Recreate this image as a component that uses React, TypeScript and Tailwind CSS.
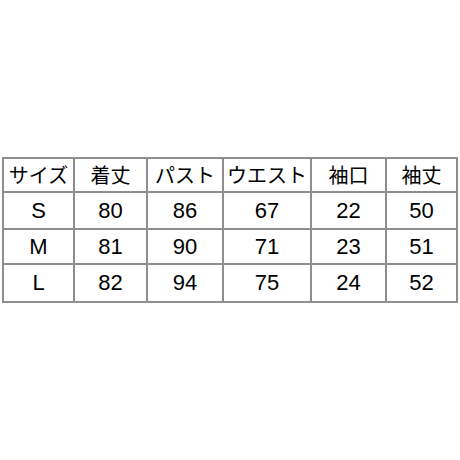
import React from "react";

const header = ["サイズ", "着丈", "バスト", "ウエスト", "袖口", "袖丈"];
const rows = [
  ["S", "80", "86", "67", "22", "50"],
  ["M", "81", "90", "71", "23", "51"],
  ["L", "82", "94", "75", "24", "52"],
];
const rowH = ["h-[35px]", "h-[33px]", "h-[36px]"];

export default function App() {
  return (
    <div className="w-[460px] h-[460px] bg-white pt-[157px] pl-[2px]">
      <div
        className="grid w-fit bg-[#8e8e8e] p-[2px] gap-[2px] grid-cols-[69px_71px_74px_86px_73px_69px] text-black"
        style={{ fontFamily: '"Noto Sans CJK JP", "Noto Sans CJK KR", sans-serif' }}
      >
        {header.map((h, i) => (
          <div
            key={i}
            className="h-[32px] bg-white flex items-center justify-center text-[20px] leading-none"
          >
            {h === "バスト" ? "パスト" : h}
          </div>
        ))}
        {rows.map((r, ri) =>
          r.map((c, ci) => (
            <div
              key={ri + "-" + ci}
              className={`${rowH[ri]} bg-white flex items-center justify-center text-[22px] leading-none`}
              style={{ fontFamily: '"Liberation Sans", Arial, sans-serif' }}
            >
              {c}
            </div>
          ))
        )}
      </div>
    </div>
  );
}
